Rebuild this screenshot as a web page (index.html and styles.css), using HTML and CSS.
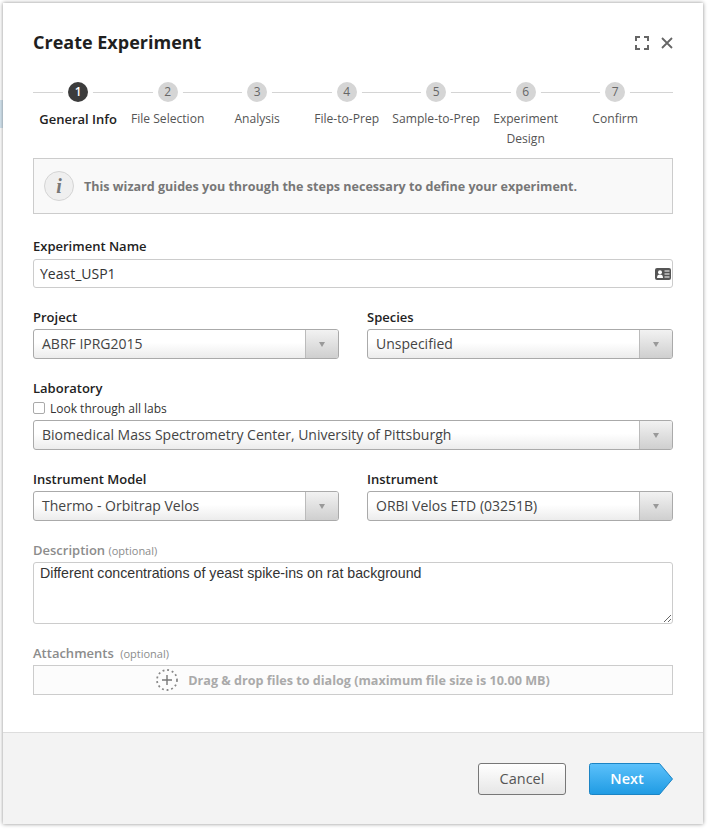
FILE: index.html
```html
<!DOCTYPE html>
<html lang="en">
<head>
<meta charset="utf-8">
<title>Create Experiment</title>
<link rel="stylesheet" href="styles.css">
</head>
<body>
<div class="dialog">
  <div class="dialog-main">
    <header class="dialog-head">
      <h1 class="title">Create Experiment</h1>
      <div class="head-icons">
        <svg class="icon-expand" width="14" height="14" viewBox="0 0 14 14"><path d="M1 5V1h4M9 1h4v4M13 9v4H9M5 13H1V9" fill="none" stroke="#666" stroke-width="2"/></svg>
        <svg class="icon-close" width="12" height="12" viewBox="0 0 12 12"><path d="M1 1l10 10M11 1L1 11" fill="none" stroke="#666" stroke-width="1.8"/></svg>
      </div>
    </header>
    <ol class="steps">
      <li class="step step-active"><span class="step-num">1</span><span class="step-label">General Info</span></li>
      <li class="step"><span class="step-num">2</span><span class="step-label">File Selection</span></li>
      <li class="step"><span class="step-num">3</span><span class="step-label">Analysis</span></li>
      <li class="step"><span class="step-num">4</span><span class="step-label">File-to-Prep</span></li>
      <li class="step"><span class="step-num">5</span><span class="step-label">Sample-to-Prep</span></li>
      <li class="step"><span class="step-num">6</span><span class="step-label">Experiment Design</span></li>
      <li class="step"><span class="step-num">7</span><span class="step-label">Confirm</span></li>
    </ol>
    <div class="info">
      <span class="info-icon">i</span>
      <span class="info-text">This wizard guides you through the steps necessary to define your experiment.</span>
    </div>
    <div class="field field-name">
      <label class="label label-name">Experiment Name</label>
      <div class="input">
        <span>Yeast_USP1</span>
        <svg class="card-icon" width="16" height="12" viewBox="0 0 16 12"><rect width="16" height="12" rx="2" fill="#555"/><circle cx="5" cy="4.2" r="2" fill="#fff"/><path d="M2 10c0-2.500 1-3.500 3-3.500s3 1 3 3.500z" fill="#fff"/><path d="M9.500 3h5M9.500 6h5M9.500 9h5" stroke="#fff" stroke-width="1.200"/></svg>
      </div>
    </div>
    <div class="row">
      <div class="field">
        <label class="label">Project</label>
        <div class="select"><span class="select-value">ABRF IPRG2015</span><span class="select-btn"><i class="caret"></i></span></div>
      </div>
      <div class="field">
        <label class="label">Species</label>
        <div class="select"><span class="select-value">Unspecified</span><span class="select-btn"><i class="caret"></i></span></div>
      </div>
    </div>
    <div class="field">
      <label class="label">Laboratory</label>
      <label class="check-row"><input class="check" type="checkbox"><span>Look through all labs</span></label>
      <div class="select"><span class="select-value">Biomedical Mass Spectrometry Center, University of Pittsburgh</span><span class="select-btn"><i class="caret"></i></span></div>
    </div>
    <div class="row">
      <div class="field">
        <label class="label">Instrument Model</label>
        <div class="select"><span class="select-value">Thermo - Orbitrap Velos</span><span class="select-btn"><i class="caret"></i></span></div>
      </div>
      <div class="field">
        <label class="label">Instrument</label>
        <div class="select"><span class="select-value">ORBI Velos ETD (03251B)</span><span class="select-btn"><i class="caret"></i></span></div>
      </div>
    </div>
    <div class="field">
      <label class="label label-muted">Description <span class="optional">(optional)</span></label>
      <textarea class="textarea">Different concentrations of yeast spike-ins on rat background</textarea>
    </div>
    <div class="field">
      <label class="label label-muted">Attachments <span class="optional optional-wide">(optional)</span></label>
      <div class="dropzone">
        <svg width="22" height="22" viewBox="0 0 22 22"><circle cx="11" cy="11" r="10" fill="none" stroke="#888" stroke-width="1.800" stroke-dasharray="1.900 2.800"/><path d="M11 6v10M6 11h10" stroke="#777" stroke-width="1.400"/></svg>
        <span>Drag &amp; drop files to dialog (maximum file size is 10.00 MB)</span>
      </div>
    </div>
  </div>
  <footer class="dialog-foot">
    <button class="btn btn-cancel" type="button">Cancel</button>
    <button class="btn btn-next" type="button">
      <svg class="next-shape" width="84" height="32" viewBox="0 0 84 32"><defs><linearGradient id="nextFill" x1="0" y1="0" x2="0" y2="1"><stop offset="0" stop-color="#5cc1fb"/><stop offset="1" stop-color="#1f9be3"/></linearGradient></defs><path d="M.5 2.500a2 2 0 0 1 2-2H70.500L83.500 16 70.500 31.500H2.500a2 2 0 0 1-2-2z" fill="url(#nextFill)" stroke="#1b84c4"/></svg>
      <span class="next-label">Next</span>
    </button>
  </footer>
</div>
</body>
</html>
```
FILE: styles.css
```css
* { box-sizing: border-box; }
html, body { margin: 0; height: 100%; }
body {
  padding: 3px 6px 5px 3px;
  background: linear-gradient(#d5e6f1, #d5e6f1) 0 100px / 3px 28px no-repeat, #fff;
  font-family: "Open Sans", sans-serif;
  color: #222;
  overflow: hidden;
}
.dialog {
  width: 700px;
  height: 821px;
  display: flex;
  flex-direction: column;
  background: #fff;
  box-shadow: 0 0 4px rgba(0, 0, 0, .45);
}
.dialog-main { flex: 1; min-height: 0; padding: 0 30px; }
.dialog-head {
  height: 79px;
  display: flex;
  align-items: center;
  justify-content: space-between;
}
.title { margin: 0 0 2px; font-size: 18px; font-weight: 700; color: #1f1f1f; }
.head-icons { display: flex; align-items: center; gap: 12px; }

.steps {
  list-style: none;
  margin: 0;
  padding: 0 0 0 .4px;
  height: 76px;
  display: grid;
  grid-template-columns: repeat(6, 89.5px) 1fr;
  background: linear-gradient(#d4d4d4, #d4d4d4) 0 10px / 100% 1px no-repeat;
}
.step { display: flex; flex-direction: column; align-items: center; width: 89.5px; }
.step-num {
  width: 20px;
  height: 20px;
  border-radius: 50%;
  background: #d5d5d5;
  color: #666;
  font-size: 12px;
  line-height: 20px;
  text-align: center;
  box-shadow: 0 0 0 5px #fff;
}
.step-label {
  margin-top: 7px;
  font-size: 12.1px;
  line-height: 20px;
  color: #555;
  text-align: center;
  width: 96px;
}
.step-active .step-num { background: #3c3c3c; color: #fff; font-weight: 600; }
.step-active .step-label { color: #222; font-weight: 600; font-size: 13px; }

.info {
  height: 56px;
  display: flex;
  align-items: center;
  gap: 10px;
  padding-left: 10px;
  background: #f9f9f9;
  border: 1px solid #ccc;
}
.info-icon {
  width: 30px;
  height: 30px;
  border-radius: 50%;
  border: 1px solid #d4d4d4;
  background: #efefef;
  color: #777;
  font-family: "Liberation Serif", serif;
  font-style: italic;
  font-weight: 700;
  font-size: 20px;
  line-height: 28px;
  text-align: center;
}
.info-text { font-size: 12.55px; font-weight: 700; color: #777; }

.field { display: flex; flex-direction: column; margin-top: 20px; }
.field-name { margin-top: 23px; }
.label {
  font-size: 13px;
  font-weight: 600;
  line-height: 18px;
  margin-bottom: 3px;
  color: #222;
}
.label-name { margin-bottom: 4px; }
.label-muted { color: #8c8c8c; }
.optional { font-size: 11px; font-weight: 400; line-height: 1; }
.optional-wide { margin-left: 3px; }
.row { display: grid; grid-template-columns: 306px 306px; column-gap: 28px; margin-top: 20px; }
.row .field { margin-top: 0; }

.input {
  height: 29px;
  display: flex;
  align-items: center;
  justify-content: space-between;
  padding: 0 1px 0 6px;
  border: 1px solid #ccc;
  border-radius: 3px;
  font-size: 14px;
  color: #333;
  background: #fff;
}
.select {
  height: 30px;
  display: flex;
  border: 1px solid #aaa;
  border-radius: 3px;
  background: linear-gradient(#fff 45%, #ececec);
  font-size: 14px;
  color: #444;
  overflow: hidden;
}
.select-value { flex: 1; padding-left: 8px; line-height: 27px; }
.select-btn {
  width: 33px;
  display: flex;
  align-items: center;
  justify-content: center;
  border-left: 1px solid #bbb;
  background: linear-gradient(#f2f2f2, #cfcfcf);
}
.caret {
  width: 0;
  height: 0;
  border-left: 3.5px solid transparent;
  border-right: 3.5px solid transparent;
  border-top: 5px solid #999;
}
.check-row {
  display: flex;
  align-items: center;
  gap: 5px;
  height: 18px;
  margin-top: -1px;
  margin-bottom: 3px;
  font-size: 12px;
  color: #333;
}
.check {
  appearance: none;
  width: 12px;
  height: 12px;
  margin: 0;
  border: 1px solid #aaa;
  border-radius: 2px;
  background: #fff;
}
.textarea {
  display: block;
  width: 100%;
  height: 62px;
  margin: 0;
  padding: 2px 6px;
  border: 1px solid #ccc;
  border-radius: 3px;
  font-family: "Liberation Sans", sans-serif;
  font-size: 14.2px;
  color: #333;
  line-height: 16px;
}
.dropzone {
  height: 30px;
  display: flex;
  align-items: center;
  justify-content: center;
  gap: 10px;
  border: 1px solid #ccc;
  background: #fcfcfc;
  font-size: 12.6px;
  font-weight: 700;
  color: #aaa;
}
.dialog-foot {
  flex: none;
  height: 92px;
  display: flex;
  align-items: flex-start;
  justify-content: flex-end;
  gap: 23px;
  padding: 30px 30px 0 0;
  background: #f3f3f3;
  border-top: 1px solid #ddd;
}
.btn {
  height: 32px;
  margin: 0;
  padding: 0 0 2px;
  font-family: inherit;
}
.btn-cancel {
  width: 88px;
  border: 1px solid #777;
  border-radius: 3px;
  background: linear-gradient(#fff, #e6e6e6);
  color: #555;
  font-size: 14.500px;
}
.btn-next {
  position: relative;
  width: 84px;
  border: 0;
  background: none;
  color: #fff;
  font-size: 14.500px;
  font-weight: 600;
}
.next-shape { position: absolute; left: 0; top: 0; }
.next-label { position: relative; margin-right: 8px; }
```
